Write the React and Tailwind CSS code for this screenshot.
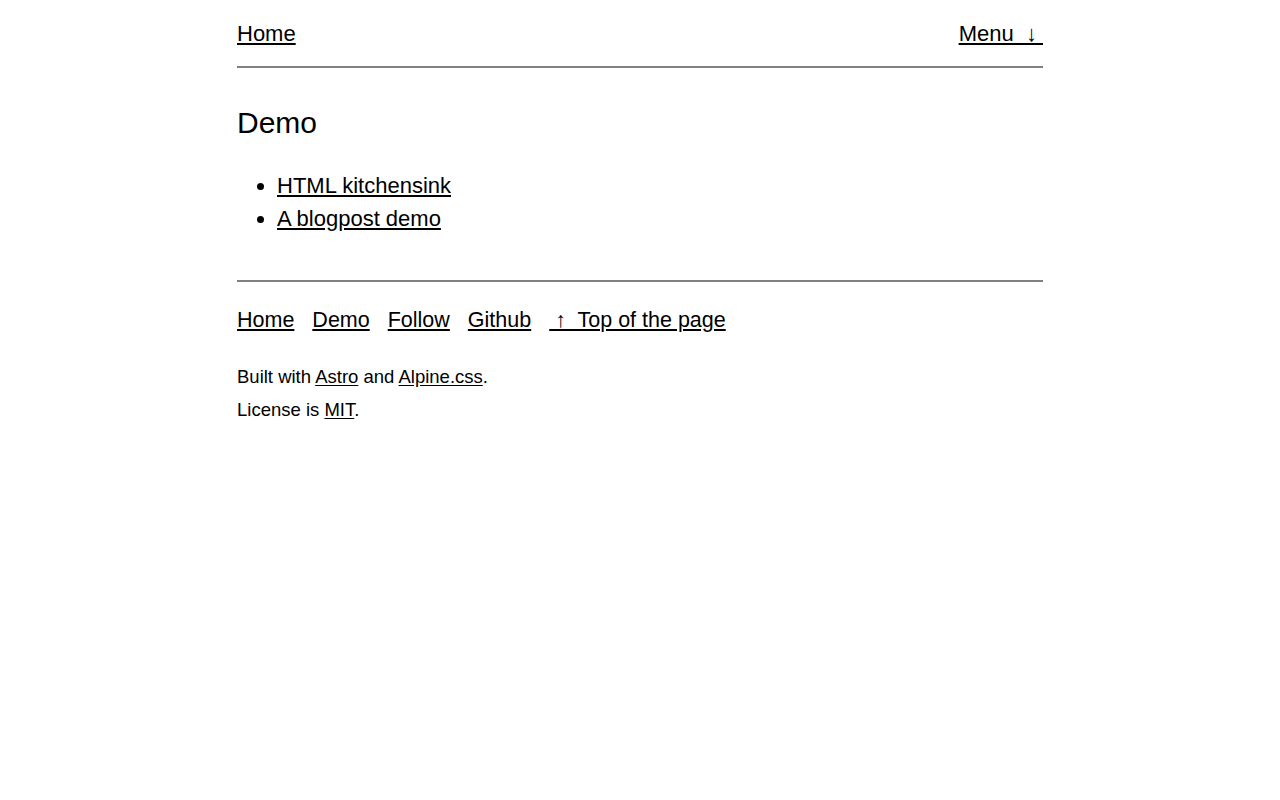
export default function App() {
  return (
    <div className="min-h-screen bg-white text-black font-['Liberation_Sans',Arial,sans-serif]">
      <div className="w-[806px] mx-auto">
        {/* Header */}
        <header className="flex justify-between items-start pt-[17px] pb-[16px] border-b-2 border-[#808080] text-[22px] leading-[33px]">
          <a href="#" className="underline underline-offset-2">Home</a>
          <a href="#" className="underline underline-offset-2 whitespace-pre">Menu  ↓ </a>
        </header>

        {/* Main */}
        <main>
          <h1 className="mt-[37px] text-[30px] leading-[36px]">Demo</h1>
          <ul className="mt-[28px] list-disc pl-10 text-[22px] leading-[33px]">
            <li>
              <a href="#" className="underline underline-offset-2">HTML kitchensink</a>
            </li>
            <li>
              <a href="#" className="underline underline-offset-2">A blogpost demo</a>
            </li>
          </ul>
        </main>

        {/* Footer */}
        <footer className="mt-[45px] border-t-2 border-[#808080]">
          <nav className="mt-[22px] flex gap-[18px] text-[21.5px] leading-[33px]">
            <a href="#" className="underline underline-offset-2">Home</a>
            <a href="#" className="underline underline-offset-2">Demo</a>
            <a href="#" className="underline underline-offset-2">Follow</a>
            <a href="#" className="underline underline-offset-2">Github</a>
            <a href="#" className="underline underline-offset-2 whitespace-pre"> ↑  Top of the page</a>
          </nav>
          <div className="mt-[23px] text-[18.5px] leading-[33px]">
            <p>
              Built with <a href="#" className="underline underline-offset-2">Astro</a> and{' '}
              <a href="#" className="underline underline-offset-2">Alpine.css</a>.
            </p>
            <p>
              License is <a href="#" className="underline underline-offset-2">MIT</a>.
            </p>
          </div>
        </footer>
      </div>
    </div>
  );
}
